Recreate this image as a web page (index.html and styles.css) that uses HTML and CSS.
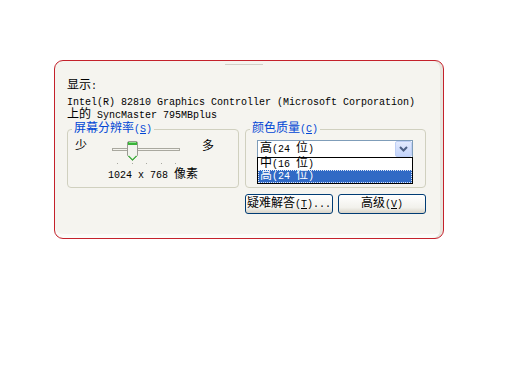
FILE: index.html
```html
<!DOCTYPE html>
<html>
<head>
  <title>显示属性</title>
  <link rel="stylesheet" href="styles.css">
</head>
<body>
  <div class="panel">
    <div class="tabline"></div>
    <div class="title"><span class="zh">显示</span>:</div>
    <div class="device">
      <div>Intel(R) 82810 Graphics Controller (Microsoft Corporation)</div>
      <div><span class="zh">上的</span> SyncMaster 795MBplus</div>
    </div>

    <div class="groups">
      <fieldset class="group res">
        <legend><span class="zh">屏幕分辨率</span>(<u>S</u>)</legend>
        <div class="slider-row">
          <span class="zh">少</span>
          <svg class="slider" width="72" height="26" viewBox="0 0 72 26">
            <rect x="2.5" y="8.5" width="67" height="2" fill="#f4f3ee" stroke="#a9a89f"/>
            <path d="M17.5 3 Q17.5 1.5 19 1.5 H26 Q27.5 1.5 27.5 3 V15.5 L22.5 20.5 L17.5 15.5 Z" fill="#f3f3ef" stroke="#9a9a92"/>
            <rect x="18" y="2" width="9" height="3" fill="#3bb33b"/>
            <rect x="19" y="2" width="7" height="1" fill="#8be08b"/>
            <path d="M18.5 15.8 L22.5 19.8 L26.5 15.8" fill="none" stroke="#3bb33b" stroke-width="1.2"/>
            <rect x="7" y="23" width="1" height="1" fill="#a8a8a0"/>
            <rect x="22" y="23" width="1" height="1" fill="#a8a8a0"/>
            <rect x="36" y="23" width="1" height="1" fill="#a8a8a0"/>
            <rect x="51" y="23" width="1" height="1" fill="#a8a8a0"/>
            <rect x="65" y="23" width="1" height="1" fill="#a8a8a0"/>
          </svg>
          <span class="zh more">多</span>
        </div>
        <div class="res-value">1024 x 768 <span class="zh">像素</span></div>
      </fieldset>

      <fieldset class="group color">
        <legend><span class="zh">颜色质量</span>(<u>C</u>)</legend>
        <div class="combo">
          <span class="combo-text"><span class="zh">高</span>(24 <span class="zh">位</span>)</span>
          <span class="combo-btn">
            <svg width="15" height="14" viewBox="0 0 15 14">
              <path d="M4 5 L7.5 8.5 L11 5" fill="none" stroke="#4d6185" stroke-width="2"/>
            </svg>
          </span>
          <ul class="combo-list">
            <li><span class="zh">中</span>(16 <span class="zh">位</span>)</li>
            <li class="sel"><span class="zh">高</span>(24 <span class="zh">位</span>)</li>
          </ul>
        </div>
      </fieldset>
    </div>

    <div class="buttons">
      <button class="btn"><span class="zh">疑难解答</span>(<u>T</u>)...</button>
      <button class="btn"><span class="zh">高级</span>(<u>V</u>)</button>
    </div>
  </div>
</body>
</html>
```
FILE: styles.css
```css
body {
  margin: 8px;
  background-color: #fff;
  font-family: "Liberation Mono", monospace;
  font-size: 10px;
  line-height: 12px;
  color: #000;
}

.zh {
  font-family: "Noto Sans CJK SC", sans-serif;
  font-size: 12px;
  line-height: 8px;
}

.panel {
  box-sizing: border-box;
  width: 390px;
  height: 179px;
  margin: 52px 0 0 46px;
  padding: 3px 17px 0 12px;
  background-color: #f5f4ef;
  border: 1px solid #c4212b;
  border-radius: 9px;
  box-shadow: inset -3px 0 0 #e8e6de, inset 0 -4px 0 #fbfbf8;
}

.tabline {
  width: 38px;
  height: 1px;
  margin-left: 158px;
  background-color: #d2d0c8;
}

.title {
  margin-top: 15px;
}

.device {
  margin-top: 4px;
}

.groups {
  display: flex;
  gap: 6px;
  margin-top: 1px;
}

.group {
  box-sizing: border-box;
  min-width: 0;
  margin: 0;
  padding: 3px 0 5px;
  border: 1px solid #d0d0bf;
  border-radius: 4px;
}

.res {
  width: 172px;
}

.color {
  width: 181px;
}

legend {
  margin-left: 4px;
  padding: 0 2px;
  color: #0046d5;
  line-height: 12px;
}

.slider-row {
  display: flex;
  align-items: flex-start;
  padding-left: 7px;
}

.slider-row .zh {
  line-height: 12px;
}

.slider {
  display: block;
  margin: 1px 0 0 23px;
}

.more {
  margin-left: 20px;
}

.res-value {
  margin-top: 3px;
  text-align: center;
}

.combo {
  position: relative;
  box-sizing: border-box;
  display: flex;
  align-items: center;
  width: 156px;
  height: 18px;
  margin: 1px 0 0 11px;
  background-color: #fff;
  border: 1px solid #7f9db9;
}

.combo-text {
  padding-left: 2px;
}

.combo-btn {
  display: flex;
  align-items: center;
  justify-content: center;
  box-sizing: border-box;
  width: 17px;
  height: 16px;
  margin-left: auto;
  background: linear-gradient(#e3ebfe, #c3d4fb);
  border: 1px solid #bfd0f6;
  border-radius: 2px;
}

.combo-list {
  position: absolute;
  left: -1px;
  top: 16px;
  box-sizing: border-box;
  width: 156px;
  margin: 0;
  padding: 0;
  list-style: none;
  background-color: #fff;
  border: 1px solid #000;
}

.combo-list li {
  height: 12px;
  padding-left: 2px;
}

.combo-list li.sel {
  height: 13px;
  color: #fff;
  background-color: #316ac5;
  outline: 1px dotted #dfe8f8;
  outline-offset: -1px;
}

.buttons {
  display: flex;
  justify-content: flex-end;
  gap: 5px;
  margin-top: 6px;
}

.btn {
  box-sizing: border-box;
  width: 88px;
  height: 20px;
  padding: 0;
  font: inherit;
  line-height: 12px;
  color: #000;
  background: linear-gradient(#ffffff, #f2f1ec 70%, #d9d4c8);
  border: 1px solid #003c74;
  border-radius: 3px;
}
```
